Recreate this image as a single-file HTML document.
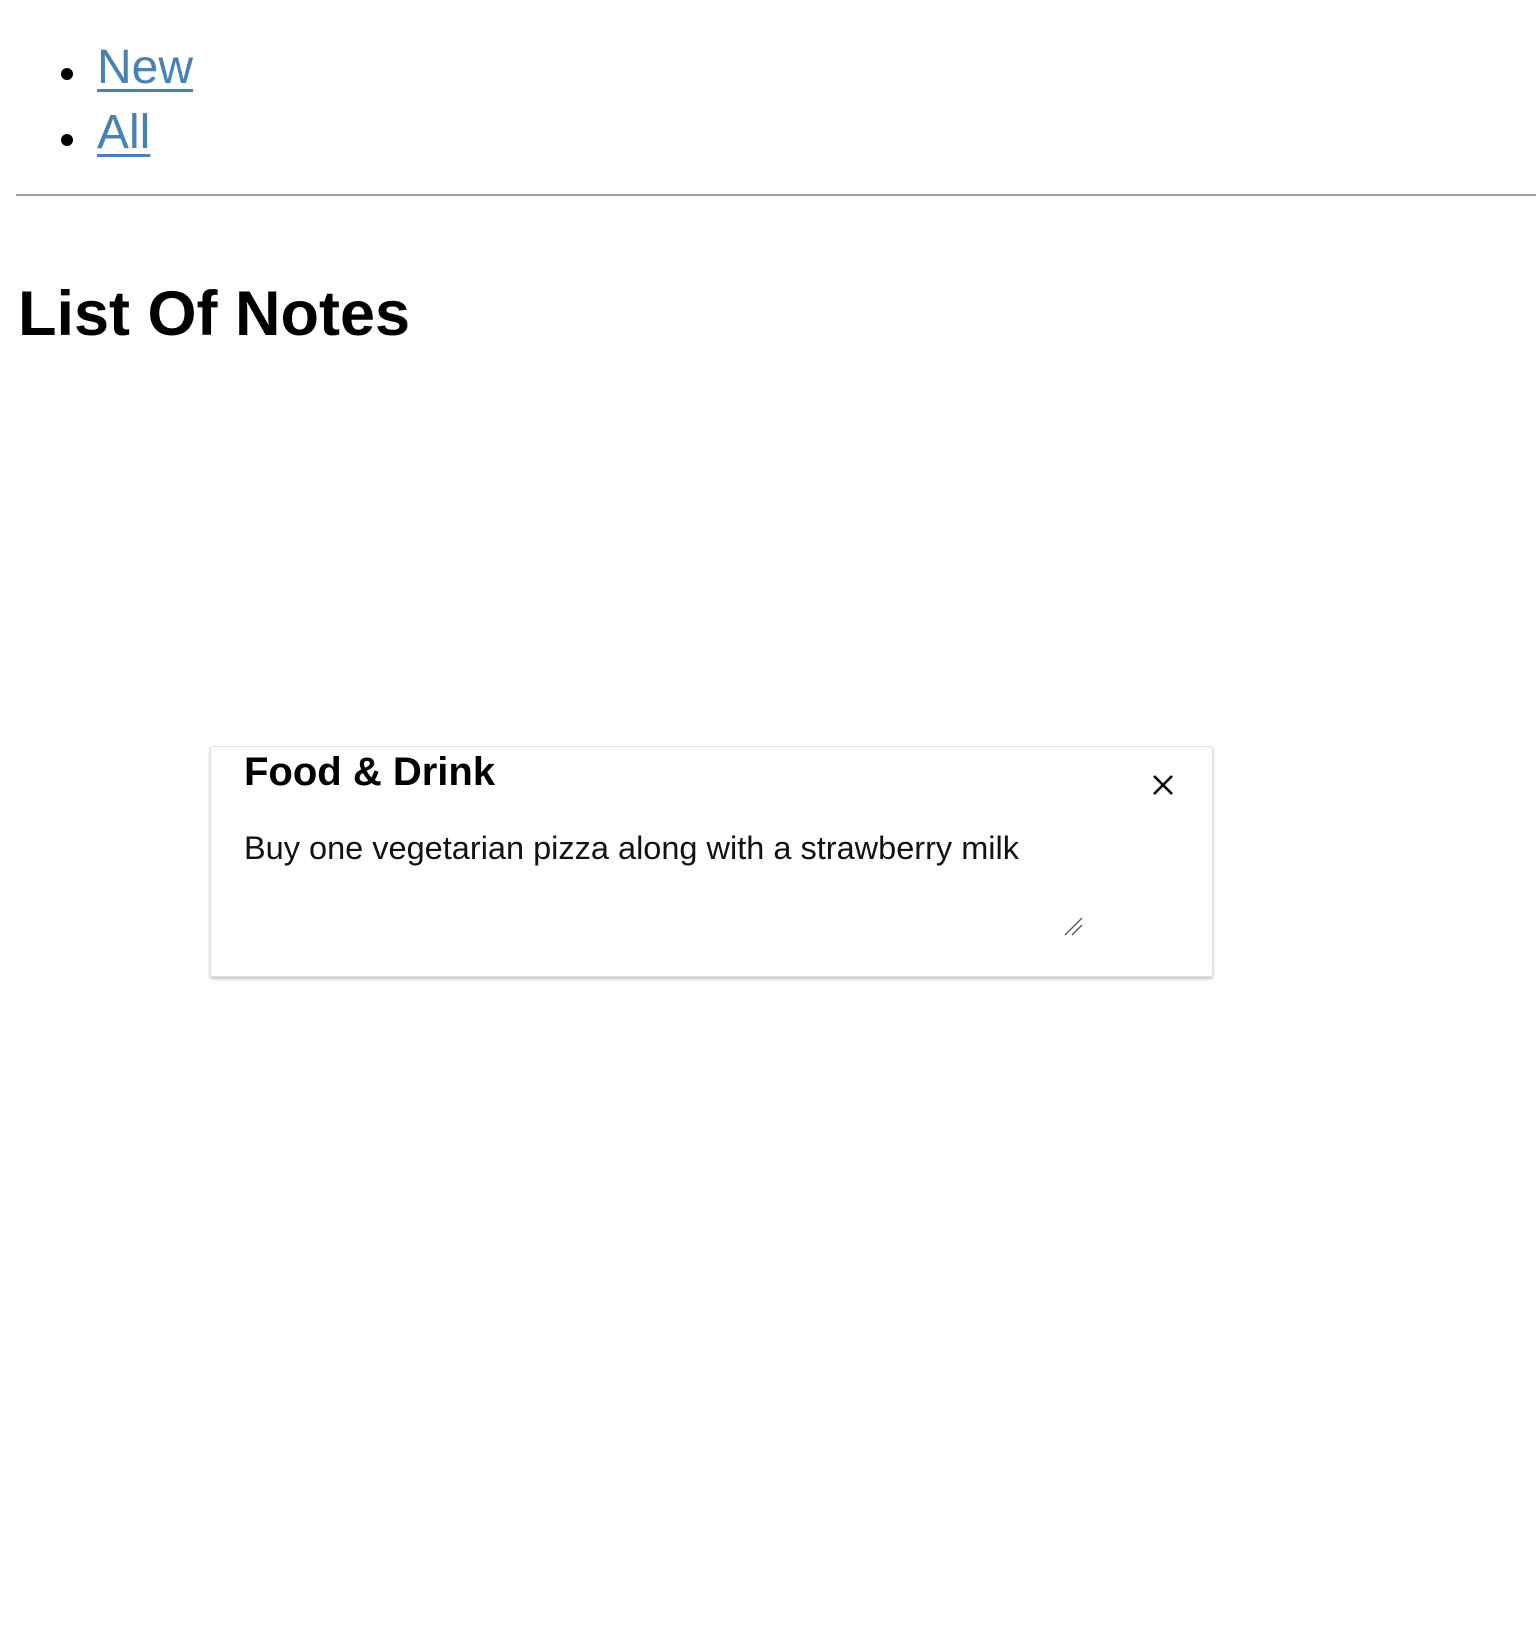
<!DOCTYPE html>
<html><head><style>
body{margin:0;background:#fff;font-family:"Liberation Sans",sans-serif;}
ul{position:absolute;left:0;top:0;margin:0;padding:0;list-style:none;}
li{position:absolute;font-size:48px;white-space:nowrap;}
li a{color:#4682b4;text-decoration:underline;text-decoration-thickness:3px;text-underline-offset:6px;}
.dot{position:absolute;width:12px;height:12px;border-radius:50%;background:#000;}
hr{position:absolute;left:16px;top:194px;width:1520px;margin:0;border:0;border-top:2px solid #a0a0a0;}
h1{position:absolute;left:18px;top:283px;margin:0;font-size:63px;font-weight:bold;line-height:1;}
.card{position:absolute;left:210px;top:746px;width:1003px;height:231px;border:1px solid #e2e2e2;border-radius:3px;box-shadow:0 2px 3px rgba(0,0,0,.25);box-sizing:border-box;}
.t{position:absolute;left:244px;top:752px;font-size:40px;font-weight:bold;line-height:1;}
.b{position:absolute;left:244px;top:832px;font-size:32.5px;line-height:1;color:#111;}
</style></head><body>
<div class="dot" style="left:61px;top:68px"></div>
<div class="dot" style="left:61px;top:134px"></div>
<ul>
<li style="left:97px;top:40px"><a>New</a></li>
<li style="left:97px;top:105px"><a>All</a></li>
</ul>
<hr>
<h1>List Of Notes</h1>
<div class="card"></div>
<div class="t">Food &amp; Drink</div>
<div class="b">Buy one vegetarian pizza along with a strawberry milk</div>
<svg style="position:absolute;left:1150px;top:772px" width="26" height="26"><path d="M4 4L22 22M22 4L4 22" stroke="#000" stroke-width="2.6"/></svg>
<svg style="position:absolute;left:1062px;top:915px" width="24" height="24"><path d="M3 20L20 3M10 20L20 10" stroke="#555" stroke-width="1.3"/></svg>
</body></html>
